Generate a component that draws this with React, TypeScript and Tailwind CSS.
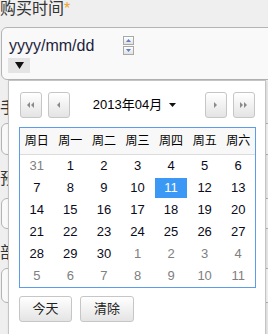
import React from "react";

const font = "font-['Liberation_Sans','Noto_Sans_CJK_SC',sans-serif]";

type Day = { n: number; other?: boolean; active?: boolean };

const weeks: Day[][] = [
  [{ n: 31, other: true }, { n: 1 }, { n: 2 }, { n: 3 }, { n: 4 }, { n: 5 }, { n: 6 }],
  [{ n: 7 }, { n: 8 }, { n: 9 }, { n: 10 }, { n: 11, active: true }, { n: 12 }, { n: 13 }],
  [{ n: 14 }, { n: 15 }, { n: 16 }, { n: 17 }, { n: 18 }, { n: 19 }, { n: 20 }],
  [{ n: 21 }, { n: 22 }, { n: 23 }, { n: 24 }, { n: 25 }, { n: 26 }, { n: 27 }],
  [
    { n: 28 },
    { n: 29 },
    { n: 30 },
    { n: 1, other: true },
    { n: 2, other: true },
    { n: 3, other: true },
    { n: 4, other: true },
  ],
  [5, 6, 7, 8, 9, 10, 11].map((n) => ({ n, other: true })),
];

const weekdays = ["周日", "周一", "周二", "周三", "周四", "周五", "周六"];

const NavButton = ({ dir, double }: { dir: "left" | "right"; double?: boolean }) => {
  const tri = (x: number) =>
    dir === "left"
      ? `M${x + 3} 0 L${x} 3 L${x + 3} 6 Z`
      : `M${x} 0 L${x + 3} 3 L${x} 6 Z`;
  return (
    <button className="w-[22px] h-[26px] flex items-center justify-center rounded-[3px] border border-[#c6c6c6] bg-gradient-to-b from-white to-[#e4e4e4]">
      <svg width={double ? 8 : 4} height="6" viewBox={double ? "0 0 8 6" : "0 0 4 6"}>
        <path d={tri(0)} fill="#8a8a8a" />
        {double && <path d={tri(4)} fill="#8a8a8a" />}
      </svg>
    </button>
  );
};

// fields that sit under the open date picker; only their left edge shows
const SideField = ({ label, mt, h, lmt }: { label: string; mt: string; h: string; lmt: string }) => (
  <>
    <div className={`${lmt} w-[8px] overflow-hidden whitespace-nowrap h-[18px] leading-[18px] text-[16px] text-[#333]`}>
      {label}
    </div>
    <div className={`${mt} ${h} ml-[1px] w-[290px] rounded-[6px] border border-[#b4b4b4] bg-[#f9f9f9]`} />
  </>
);

export default function App() {
  return (
    <div className={`relative w-[268px] h-[334px] overflow-hidden bg-[#efefef] ${font}`}>
      <div className="h-[18px] leading-[18px] text-[16px] text-[#333]">
        购买时间<span className="text-[#eea429]">*</span>
      </div>

      <div className="mt-[9px] ml-[1px] w-[290px] rounded-[6px] border border-[#b4b4b4] bg-[#f9f9f9] pt-[7px] pb-[6px] pl-[7px]">
        <div className="flex items-center h-[21px]">
          <span className="w-[114px] text-[16px] leading-[21px] text-[#1e1e3c]">yyyy/mm/dd</span>
          <div className="flex flex-col gap-[1px]">
            <span className="w-[11px] h-[9px] flex items-center justify-center border border-[#a8a8a8] bg-gradient-to-b from-white to-[#e2e2e2]">
              <svg width="5" height="3" viewBox="0 0 5 3">
                <path d="M0 3 L2.5 0 L5 3 Z" fill="#5b7fc4" />
              </svg>
            </span>
            <span className="w-[11px] h-[9px] flex items-center justify-center border border-[#a8a8a8] bg-gradient-to-b from-white to-[#e2e2e2]">
              <svg width="5" height="3" viewBox="0 0 5 3">
                <path d="M0 0 L2.5 3 L5 0 Z" fill="#5b7fc4" />
              </svg>
            </span>
          </div>
        </div>
        <div className="mt-[2px] -ml-[1px] w-[22px] h-[15px] flex items-center justify-center bg-[#e4e4e4]">
          <svg width="9" height="7" viewBox="0 0 9 7">
            <path d="M0 0 L9 0 L4.5 7 Z" fill="#111" />
          </svg>
        </div>
      </div>

      <SideField label="手机号码" lmt="mt-[19px]" mt="mt-[6px]" h="h-[32px]" />
      <SideField label="预计到达" lmt="mt-[15px]" mt="mt-[10px]" h="h-[31px]" />
      <SideField label="部门" lmt="mt-[15px]" mt="mt-[6px]" h="h-[35px]" />

      <div className="absolute left-[8px] top-[80px] w-[258px] h-[270px] border border-[#c4c4c4] bg-white shadow-[1px_1px_3px_rgba(0,0,0,0.12)]">
        <div className="flex items-center justify-between pt-[11px] pl-[11px] pr-[10px]">
          <div className="flex gap-[6px]">
            <NavButton dir="left" double />
            <NavButton dir="left" />
          </div>
          <div className="flex-1 flex items-center justify-center pr-[6px] text-[13px] text-black">
            2013年04月
            <svg className="ml-[7px]" width="7" height="4" viewBox="0 0 7 4">
              <path d="M0 0 L7 0 L3.5 4 Z" fill="#111" />
            </svg>
          </div>
          <div className="flex gap-[6px]">
            <NavButton dir="right" />
            <NavButton dir="right" double />
          </div>
        </div>

        <div className="mt-[9px] ml-[10px] w-[237px] border border-[#5c9ce8]">
          <div className="grid grid-cols-7 h-[27px] items-center bg-[#f8f8f8] border-b border-[#dcdcdc]">
            {weekdays.map((w) => (
              <span key={w} className="text-center text-[12px] text-black">
                {w}
              </span>
            ))}
          </div>
          {weeks.map((week, i) => (
            <div key={i} className="grid grid-cols-7 h-[22px]">
              {week.map((d, j) => (
                <div key={j} className="flex p-[1px]">
                  <span
                    className={`flex-1 flex items-center justify-center text-[13px] ${
                      d.active
                        ? "bg-[#3b98f5] text-white"
                        : d.other
                        ? "text-[#808080]"
                        : "text-[#0a0a20]"
                    }`}
                  >
                    {d.n}
                  </span>
                </div>
              ))}
            </div>
          ))}
        </div>

        <div className="mt-[8px] ml-[10px] flex gap-[8px]">
          <button className="w-[53px] h-[26px] rounded-[3px] border border-[#c6c6c6] bg-gradient-to-b from-white to-[#e4e4e4] text-[13px] text-[#222]">
            今天
          </button>
          <button className="w-[54px] h-[26px] rounded-[3px] border border-[#c6c6c6] bg-gradient-to-b from-white to-[#e4e4e4] text-[13px] text-[#222]">
            清除
          </button>
        </div>
      </div>
    </div>
  );
}
